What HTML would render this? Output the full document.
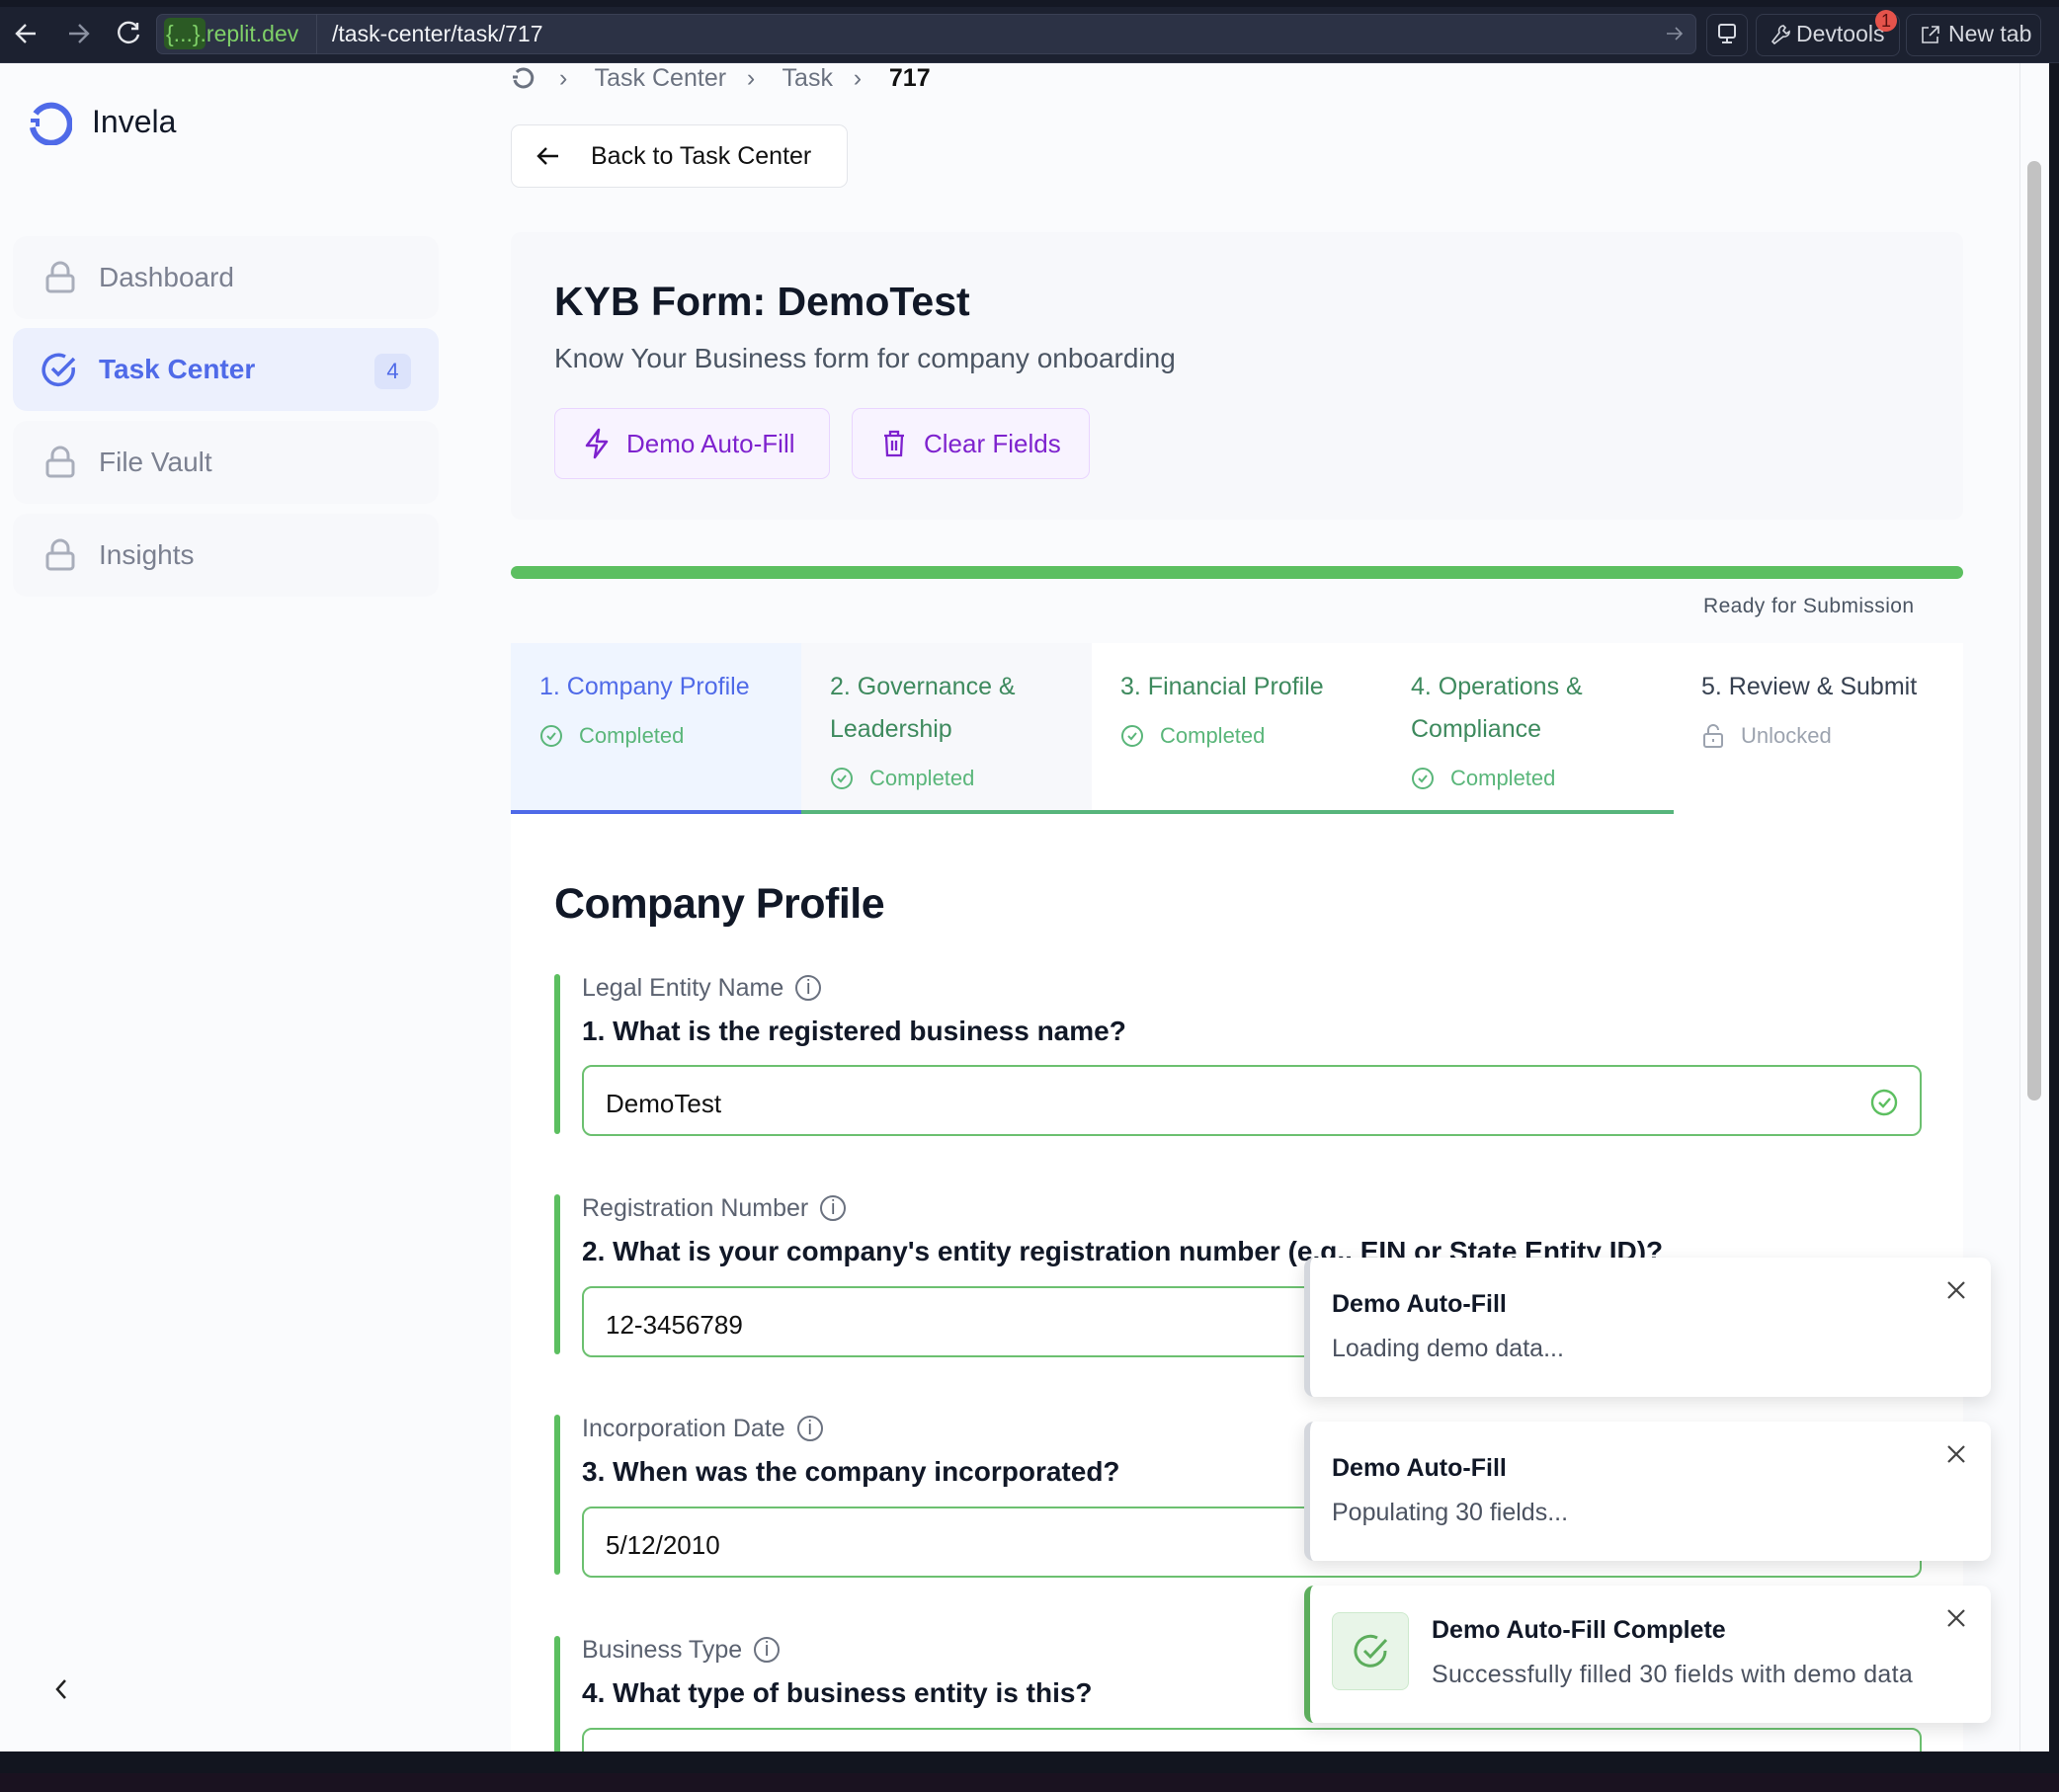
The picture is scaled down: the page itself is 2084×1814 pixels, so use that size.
<!DOCTYPE html>
<html><head><meta charset="utf-8"><style>
*{box-sizing:border-box;margin:0;padding:0}
body{width:2084px;height:1814px;overflow:hidden;background:#12151f;font-family:"Liberation Sans",sans-serif;position:relative}
.a{position:absolute}
.top{left:0;top:0;width:2084px;height:64px;background:#1c2130;border-bottom:1px solid #2b3142}
.page{left:0;top:64px;width:2074px;height:1709px;background:#fafbfd;overflow:hidden}
.nav{left:13px;width:431px;height:84px;border-radius:14px;background:#f7f8fb}
.nav span{position:absolute;left:87px;top:26px;font-size:28px;color:#7b8090}
.lab{font-size:25px;color:#5b6270}
.q{font-size:28px;font-weight:bold;color:#111827}
.inp{left:589px;width:1356px;height:72px;border:2px solid #6cc070;border-radius:10px;background:#fff;font-size:26px;color:#111;padding:22px 0 0 22px}
.bar{left:561px;width:6px;background:#5cbf60;border-radius:3px}
.toast{left:1320px;width:695px;background:#fff;border-radius:10px;box-shadow:0 6px 18px rgba(0,0,0,.12);border-left:6px solid #d4d7dd}
.tt{position:absolute;font-size:25px;font-weight:bold;color:#111827}
.tb{position:absolute;font-size:25px;color:#4b5260}
.x{position:absolute;right:24px;top:22px}
.tab{top:651px;width:294px;height:173px}
.tab .t{position:absolute;left:29px;top:23px;font-size:25px;line-height:43px}
.tab .s{position:absolute;left:29px;font-size:22px;color:#5ab67a;display:flex;align-items:center;gap:16px}
.ii{font-size:20px;border:2px solid #6b7280;border-radius:50%;display:inline-block;width:26px;height:26px;text-align:center;line-height:22px;margin-left:12px;vertical-align:2px}
</style></head><body>
<div class="a top">
 <div class="a" style="left:0;top:0;width:2084px;height:7px;background:#141824"></div>
 <svg class="a" style="left:14px;top:22px" width="26" height="24" viewBox="0 0 26 24"><path d="M22 12H4M12 3 3 12l9 9" stroke="#e5e7eb" stroke-width="2.4" fill="none"/></svg>
 <svg class="a" style="left:66px;top:22px" width="26" height="24" viewBox="0 0 26 24"><path d="M4 12h18M14 3l9 9-9 9" stroke="#8a90a0" stroke-width="2.4" fill="none"/></svg>
 <svg class="a" style="left:116px;top:20px" width="28" height="28" viewBox="0 0 28 28"><path d="M23 8A10 10 0 1 0 24 15M23 3v6h-6" stroke="#e5e7eb" stroke-width="2.4" fill="none"/></svg>
 <div class="a" style="left:158px;top:14px;width:1559px;height:41px;background:#2c3245;border-radius:7px;border:1px solid #3a4054"></div>
 <div class="a" style="left:166px;top:18px;width:42px;height:32px;background:#2b5a24;border-radius:6px"></div>
 <div class="a" style="left:168px;top:21px;font-size:23px;color:#7fd068">{...}.replit.dev</div>
 <div class="a" style="left:320px;top:14px;width:1px;height:41px;background:#3d4356"></div>
 <div class="a" style="left:336px;top:21px;font-size:23px;color:#f1f3f6">/task-center/task/717</div>
 <svg class="a" style="left:1686px;top:26px" width="18" height="16" viewBox="0 0 18 16"><path d="M1 8h15M10 2l6 6-6 6" stroke="#8a90a0" stroke-width="1.6" fill="none"/></svg>
 <div class="a" style="left:1727px;top:14px;width:42px;height:43px;border:1px solid #343a4c;border-radius:8px"></div>
 <svg class="a" style="left:1738px;top:24px" width="20" height="22" viewBox="0 0 20 22"><rect x="2" y="1" width="16" height="13" rx="2" stroke="#d6d9e0" stroke-width="2" fill="none"/><path d="M10 14v4M5 19h10" stroke="#d6d9e0" stroke-width="2"/></svg>
 <div class="a" style="left:1777px;top:14px;width:146px;height:43px;border:1px solid #343a4c;border-radius:8px"></div>
 <svg class="a" style="left:1792px;top:24px" width="20" height="22" viewBox="0 0 20 22"><path d="M13 2a5 5 0 0 0-4 7L2 18l2 2 9-7a5 5 0 0 0 6-5l-3 2-3-3 2-3z" stroke="#d6d9e0" stroke-width="1.6" fill="none"/></svg>
 <div class="a" style="left:1818px;top:21px;font-size:23px;color:#d6d9e0">Devtools</div>
 <div class="a" style="left:1898px;top:10px;width:22px;height:22px;border-radius:11px;background:#e5534b;color:#5a1010;font-size:18px;text-align:center;line-height:22px">1</div>
 <div class="a" style="left:1929px;top:14px;width:137px;height:43px;border:1px solid #343a4c;border-radius:8px"></div>
 <svg class="a" style="left:1944px;top:25px" width="20" height="20" viewBox="0 0 20 20"><path d="M8 3H2v15h15v-6M11 2h7v7M18 2 9 11" stroke="#d6d9e0" stroke-width="1.6" fill="none"/></svg>
 <div class="a" style="left:1972px;top:21px;font-size:23px;color:#d6d9e0">New tab</div>
</div>
<div class="a page">
 <svg class="a" style="left:27px;top:37px" width="46" height="46" viewBox="0 0 46 46"><path d="M9 14A19 19 0 1 1 6 28" stroke="#4f6ae8" stroke-width="6" fill="none"/><path d="M4 21h7v6" stroke="#4f6ae8" stroke-width="4" fill="none"/></svg>
 <div class="a" style="left:93px;top:41px;font-size:32px;color:#111827">Invela</div>
 <div class="a nav" style="top:175px"><svg class="a" style="left:32px;top:24px" width="32" height="36" viewBox="0 0 32 36"><rect x="3" y="16" width="26" height="16" rx="3" stroke="#a9aebb" stroke-width="3" fill="none"/><path d="M8 16V11a8 8 0 0 1 16 0v5" stroke="#a9aebb" stroke-width="3" fill="none"/></svg><span>Dashboard</span></div>
 <div class="a nav" style="top:268px;background:#ecf0fd"><svg class="a" style="left:29px;top:24px" width="36" height="36" viewBox="0 0 36 36"><path d="M32 16A15 15 0 1 1 24 5" stroke="#4f6ae8" stroke-width="3.5" fill="none"/><path d="M11 17l6 6L33 7" stroke="#4f6ae8" stroke-width="3.5" fill="none"/></svg><span style="color:#4f6ae8;font-weight:bold">Task Center</span><div class="a" style="left:366px;top:26px;width:37px;height:36px;background:#dce3fb;border-radius:8px;color:#4f6ae8;font-size:22px;text-align:center;line-height:36px">4</div></div>
 <div class="a nav" style="top:362px"><svg class="a" style="left:32px;top:24px" width="32" height="36" viewBox="0 0 32 36"><rect x="3" y="16" width="26" height="16" rx="3" stroke="#a9aebb" stroke-width="3" fill="none"/><path d="M8 16V11a8 8 0 0 1 16 0v5" stroke="#a9aebb" stroke-width="3" fill="none"/></svg><span>File Vault</span></div>
 <div class="a nav" style="top:456px"><svg class="a" style="left:32px;top:24px" width="32" height="36" viewBox="0 0 32 36"><rect x="3" y="16" width="26" height="16" rx="3" stroke="#a9aebb" stroke-width="3" fill="none"/><path d="M8 16V11a8 8 0 0 1 16 0v5" stroke="#a9aebb" stroke-width="3" fill="none"/></svg><span>Insights</span></div>
 <svg class="a" style="left:54px;top:1634px" width="16" height="24" viewBox="0 0 16 24"><path d="M12 3 4 12l8 9" stroke="#222" stroke-width="2.5" fill="none"/></svg>
 <div class="a" style="left:2044px;top:0;width:1px;height:1709px;background:#e5e7eb"></div>
 <div class="a" style="left:2052px;top:99px;width:14px;height:951px;background:#c2c2c2;border-radius:7px"></div>
 <svg class="a" style="left:517px;top:2px" width="26" height="26" viewBox="0 0 26 26"><path d="M6 7A9 9 0 1 1 4 15" stroke="#6b7280" stroke-width="3" fill="none"/><path d="M2 12h5" stroke="#6b7280" stroke-width="3"/></svg>
 <div class="a" style="left:566px;top:1px;font-size:25px;color:#6b7280">›&nbsp;&nbsp;&nbsp; Task Center &nbsp;&nbsp;›&nbsp;&nbsp;&nbsp; Task &nbsp;&nbsp;›&nbsp;&nbsp;&nbsp; <b style="color:#111">717</b></div>
 <div class="a" style="left:517px;top:62px;width:341px;height:64px;background:#fff;border:1px solid #e3e5ea;border-radius:9px"></div>
 <svg class="a" style="left:542px;top:83px" width="26" height="22" viewBox="0 0 26 22"><path d="M23 11H3M11 3 3 11l8 8" stroke="#111" stroke-width="2.4" fill="none"/></svg>
 <div class="a" style="left:598px;top:80px;font-size:25px;color:#111">Back to Task Center</div>
 <div class="a" style="left:517px;top:171px;width:1470px;height:291px;background:#f7f8fb;border-radius:10px"></div>
 <div class="a" style="left:561px;top:218px;font-size:41px;font-weight:bold;color:#111827">KYB Form: DemoTest</div>
 <div class="a" style="left:561px;top:283px;font-size:28px;color:#4b5563">Know Your Business form for company onboarding</div>
 <div class="a" style="left:561px;top:349px;width:279px;height:72px;background:#f8f3ff;border:1px solid #e9d5ff;border-radius:9px"></div>
 <svg class="a" style="left:590px;top:369px" width="28" height="32" viewBox="0 0 28 32"><path d="M16 2 4 18h10l-2 12 12-16H14z" stroke="#7e22ce" stroke-width="2.5" fill="none" stroke-linejoin="round"/></svg>
 <div class="a" style="left:634px;top:370px;font-size:26px;color:#7e22ce">Demo Auto-Fill</div>
 <div class="a" style="left:862px;top:349px;width:241px;height:72px;background:#f8f3ff;border:1px solid #e9d5ff;border-radius:9px"></div>
 <svg class="a" style="left:892px;top:370px" width="26" height="30" viewBox="0 0 26 30"><path d="M3 7h20M9 7V3h8v4M5 7l1 20h14l1-20M11 12v10M15 12v10" stroke="#7e22ce" stroke-width="2.3" fill="none"/></svg>
 <div class="a" style="left:935px;top:370px;font-size:26px;color:#7e22ce">Clear Fields</div>
 <div class="a" style="left:517px;top:509px;width:1470px;height:13px;background:#5cbf60;border-radius:7px"></div>
 <div class="a" style="left:1724px;top:538px;font-size:21px;color:#4b5563;letter-spacing:.4px">Ready for Submission</div>
 <div class="a" style="left:517px;top:587px;width:1470px;height:173px;background:#fff"></div>
 <div class="a tab" style="left:517px;top:587px;background:#eff5ff"><div class="t" style="color:#4f6ae8">1. Company Profile</div><div class="s" style="top:81px"><svg width="24" height="24" viewBox="0 0 24 24"><circle cx="12" cy="12" r="10" stroke="#5ab67a" stroke-width="2" fill="none"/><path d="M8 12l3 3 5-6" stroke="#5ab67a" stroke-width="2" fill="none"/></svg>Completed</div></div>
 <div class="a tab" style="left:811px;top:587px;background:#f7f8fb"><div class="t" style="color:#3e8a5e">2. Governance &amp;<br>Leadership</div><div class="s" style="top:124px"><svg width="24" height="24" viewBox="0 0 24 24"><circle cx="12" cy="12" r="10" stroke="#5ab67a" stroke-width="2" fill="none"/><path d="M8 12l3 3 5-6" stroke="#5ab67a" stroke-width="2" fill="none"/></svg>Completed</div></div>
 <div class="a tab" style="left:1105px;top:587px"><div class="t" style="color:#3e8a5e">3. Financial Profile</div><div class="s" style="top:81px"><svg width="24" height="24" viewBox="0 0 24 24"><circle cx="12" cy="12" r="10" stroke="#5ab67a" stroke-width="2" fill="none"/><path d="M8 12l3 3 5-6" stroke="#5ab67a" stroke-width="2" fill="none"/></svg>Completed</div></div>
 <div class="a tab" style="left:1399px;top:587px"><div class="t" style="color:#3e8a5e">4. Operations &amp;<br>Compliance</div><div class="s" style="top:124px"><svg width="24" height="24" viewBox="0 0 24 24"><circle cx="12" cy="12" r="10" stroke="#5ab67a" stroke-width="2" fill="none"/><path d="M8 12l3 3 5-6" stroke="#5ab67a" stroke-width="2" fill="none"/></svg>Completed</div></div>
 <div class="a tab" style="left:1693px;top:587px"><div class="t" style="color:#374151">5. Review &amp; Submit</div><div class="s" style="top:81px;color:#9ca3af"><svg width="24" height="26" viewBox="0 0 24 26"><rect x="3" y="11" width="18" height="13" rx="2" stroke="#9ca3af" stroke-width="2" fill="none"/><path d="M7 11V7a5 5 0 0 1 10 0" stroke="#9ca3af" stroke-width="2" fill="none"/><path d="M12 16v3" stroke="#9ca3af" stroke-width="2"/></svg>Unlocked</div></div>
 <div class="a" style="left:517px;top:756px;width:294px;height:4px;background:#4f6ae8"></div>
 <div class="a" style="left:811px;top:756px;width:883px;height:4px;background:#57b57c"></div>
 <div class="a" style="left:517px;top:760px;width:1470px;height:960px;background:#fff"></div>
 <div class="a" style="left:561px;top:827px;font-size:43px;font-weight:bold;color:#111827;letter-spacing:-.5px">Company Profile</div>
 <div class="a bar" style="top:922px;height:162px"></div>
 <div class="a lab" style="left:589px;top:922px">Legal Entity Name<span class="ii">i</span></div>
 <div class="a q" style="left:589px;top:964px">1. What is the registered business name?</div>
 <div class="a inp" style="top:1014px">DemoTest<svg class="a" style="right:22px;top:22px" width="28" height="28" viewBox="0 0 28 28"><circle cx="14" cy="14" r="12" stroke="#5cbf60" stroke-width="2.4" fill="none"/><path d="M9 14l4 4 7-8" stroke="#5cbf60" stroke-width="2.4" fill="none"/></svg></div>
 <div class="a bar" style="top:1145px;height:162px"></div>
 <div class="a lab" style="left:589px;top:1145px">Registration Number<span class="ii">i</span></div>
 <div class="a q" style="left:589px;top:1187px">2. What is your company's entity registration number (e.g., EIN or State Entity ID)?</div>
 <div class="a inp" style="top:1238px">12-3456789</div>
 <div class="a bar" style="top:1368px;height:162px"></div>
 <div class="a lab" style="left:589px;top:1368px">Incorporation Date<span class="ii">i</span></div>
 <div class="a q" style="left:589px;top:1410px">3. When was the company incorporated?</div>
 <div class="a inp" style="top:1461px">5/12/2010</div>
 <div class="a bar" style="top:1592px;height:130px"></div>
 <div class="a lab" style="left:589px;top:1592px">Business Type<span class="ii">i</span></div>
 <div class="a q" style="left:589px;top:1634px">4. What type of business entity is this?</div>
 <div class="a inp" style="top:1685px"></div>
 <div class="a toast" style="top:1209px;height:141px"><div class="tt" style="left:22px;top:33px">Demo Auto-Fill</div><div class="tb" style="left:22px;top:78px">Loading demo data...</div><svg class="x" width="22" height="22" viewBox="0 0 22 22"><path d="M3 3l16 16M19 3 3 19" stroke="#444" stroke-width="2.2"/></svg></div>
 <div class="a toast" style="top:1375px;height:141px"><div class="tt" style="left:22px;top:33px">Demo Auto-Fill</div><div class="tb" style="left:22px;top:78px">Populating 30 fields...</div><svg class="x" width="22" height="22" viewBox="0 0 22 22"><path d="M3 3l16 16M19 3 3 19" stroke="#444" stroke-width="2.2"/></svg></div>
 <div class="a toast" style="top:1541px;height:139px;border-left-color:#5cad5c"><div class="a" style="left:22px;top:27px;width:78px;height:79px;background:#e8f5e8;border:1px solid #cde9cd;border-radius:8px"><svg class="a" style="left:20px;top:20px" width="38" height="38" viewBox="0 0 38 38"><path d="M33 18A15 15 0 1 1 25 5" stroke="#5cad5c" stroke-width="3" fill="none"/><path d="M12 18l6 6L34 7" stroke="#5cad5c" stroke-width="3" fill="none"/></svg></div><div class="tt" style="left:123px;top:31px">Demo Auto-Fill Complete</div><div class="tb" style="left:123px;top:76px;letter-spacing:.3px">Successfully filled 30 fields with demo data</div><svg class="x" width="22" height="22" viewBox="0 0 22 22"><path d="M3 3l16 16M19 3 3 19" stroke="#444" stroke-width="2.2"/></svg></div>
</div>
<div class="a" style="left:0;top:1795px;width:2084px;height:19px;background:#1a1220"></div>
</body></html>
